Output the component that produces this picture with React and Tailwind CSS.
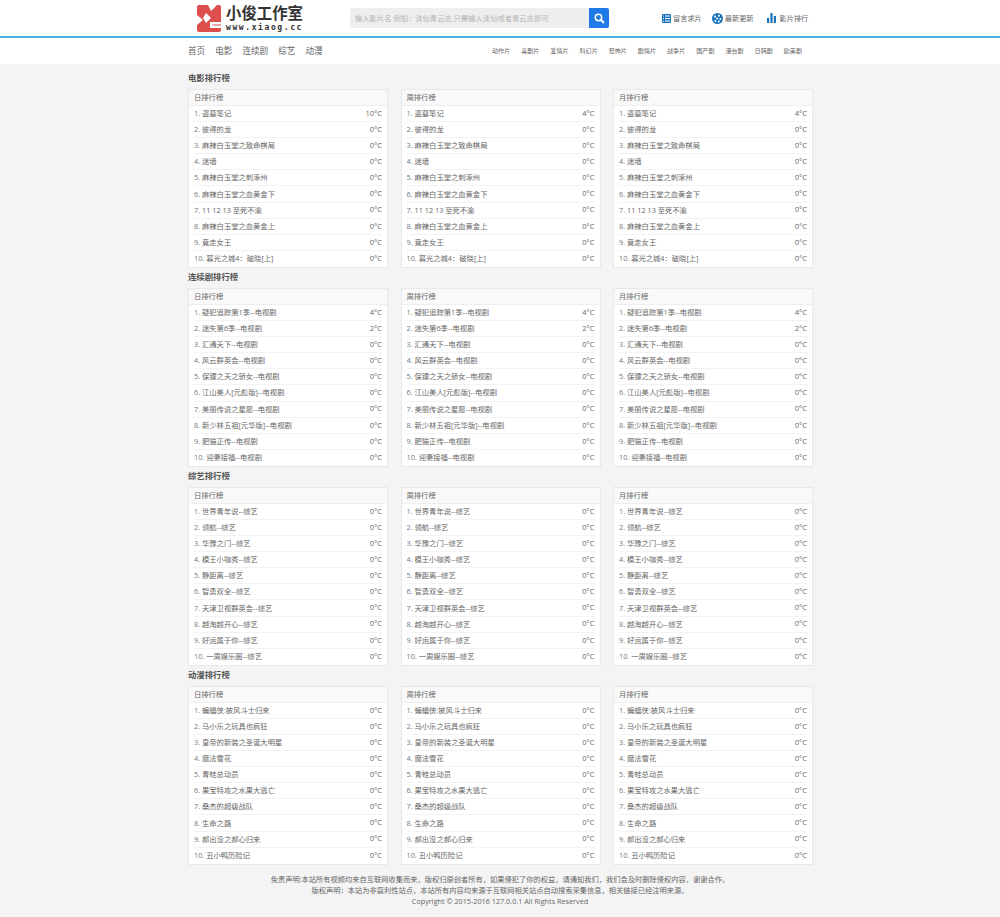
import React from "react";

const movies = [["盗墓笔记","10°C","4°C","4°C"],["彼得的龙"],["麻辣白玉堂之致命棋局"],["迷墙"],["麻辣白玉堂之刺涿州"],["麻辣白玉堂之血黄金下"],["11 12 13 至死不渝"],["麻辣白玉堂之血黄金上"],["竟走女王"],["暮光之城4：破晓[上]"]];
const tv = [["疑犯追踪第1季--电视剧","4°C","4°C","4°C"],["迷失第6季--电视剧","2°C","2°C","2°C"],["汇通天下--电视剧"],["风云群英会--电视剧"],["保镖之天之骄女--电视剧"],["江山美人[元彪版]--电视剧"],["美丽传说之星愿--电视剧"],["新少林五祖[元华版]--电视剧"],["肥猫正传--电视剧"],["迎妻接福--电视剧"]];
const variety = [["世界青年说--综艺"],["领航--综艺"],["华豫之门--综艺"],["模王小咖秀--综艺"],["静距离--综艺"],["智勇双全--综艺"],["天津卫视群英会--综艺"],["越淘越开心--综艺"],["好运属于你--综艺"],["一周娱乐圈--综艺"]];
const anime = [["蝙蝠侠:披风斗士归来"],["马小乐之玩具也疯狂"],["皇帝的新装之圣诞大明星"],["魔法雪花"],["青蛙总动员"],["果宝特攻之水果大逃亡"],["桑杰的超级战队"],["生命之路"],["郝出没之郝心归来"],["丑小鸭历险记"]];

const sections = [
  ["电影排行榜", movies],
  ["连续剧排行榜", tv],
  ["综艺排行榜", variety],
  ["动漫排行榜", anime],
];
const periods = ["日排行榜", "周排行榜", "月排行榜"];
const categories = ["动作片","喜剧片","爱情片","科幻片","恐怖片","剧情片","战争片","国产剧","港台剧","日韩剧","欧美剧"];

function Card({ title, rows, col }) {
  return (
    <div className="w-[200px] border border-[#e8e8e8] bg-white">
      <div className="flex h-[16px] items-center border-b border-[#eeeeee] bg-[#f9f9f9] px-[5px] text-[7.3px] text-[#666]">{title}</div>
      <ul className="px-[5px]">
        {rows.map((r, i) => (
          <li key={i} className="flex h-[16.1px] items-center justify-between border-b border-[#f3f3f3] text-[7.3px] text-[#666] last:border-b-0">
            <span><span className="text-[7.3px] text-[#777]">{i + 1}. </span>{r[0]}</span>
            <span className="text-[7.5px] text-[#666]">{r[col + 1] || "0°C"}</span>
          </li>
        ))}
      </ul>
    </div>
  );
}

function Logo() {
  return (
    <div className="flex items-center">
      <svg width="24" height="27" viewBox="0 0 24 27">
        <rect width="24" height="27" rx="2" fill="#dc4f4c"/>
        <path d="M8 0H11L14 6L20 0H13Z" fill="#fff"/>
        <path d="M0 10L6 15L0 20Z" fill="#fff"/>
        <path d="M9 8L14 13L9 18L6 13Z" fill="#fff"/>
        <path d="M13 17H24V19.5H15.5V20.5H24V23H13Z" fill="#fff"/>
      </svg>
      <div className="ml-[5px] flex flex-col">
        <span className="text-[15.4px] leading-[18px] font-bold text-[#333]">小俊工作室</span>
        <span className="font-['DejaVu_Sans_Mono',monospace] text-[8px] leading-[9px] font-bold tracking-[1.6px] whitespace-nowrap text-[#333]">www.xiaog.cc</span>
      </div>
    </div>
  );
}

export default function App() {
  return (
    <div className="min-h-[917px] bg-[#f4f4f4] font-['Open_Sans','Noto_Sans_CJK_SC',sans-serif]">
      <div className="h-[38px] border-b-2 border-[#45b0dc] bg-white">
        <div className="mx-auto flex h-[36px] w-[626px] items-center">
          <div className="ml-[10px] w-[153px]"><Logo /></div>
          <div className="flex h-[20px] w-[259px]">
            <div className="flex w-[239px] items-center rounded-l-[2px] bg-[#eeeeee] px-[5px] text-[7.3px] whitespace-nowrap text-[#b5b5b5]">输入影片名 例如：诛仙青云志 只需输入诛仙或者青云志即可</div>
            <div className="flex w-[20px] items-center justify-center rounded-r-[2px] bg-[#1f7ae8]">
              <svg width="11" height="11" viewBox="0 0 11 11" fill="none" stroke="#fff" strokeWidth="1.5"><circle cx="4.5" cy="4.5" r="3.2"/><path d="M7 7L10 10" strokeWidth="2"/></svg>
            </div>
          </div>
          <div className="ml-[53px] flex items-center text-[7.2px] text-[#666]">
            <svg width="9" height="9" viewBox="0 0 9 9"><rect width="9" height="9" rx="1" fill="#1a75bc"/><path d="M1 2H2M3 2H8M1 4.5H2M3 4.5H8M1 7H2M3 7H8" stroke="#fff" strokeWidth="1"/></svg>
            <span className="ml-[2px]">留言求片</span>
            <svg width="11" height="11" viewBox="0 0 11 11" className="ml-[10px]"><circle cx="5.5" cy="5.5" r="5.5" fill="#1a75bc"/><circle cx="3" cy="3.6" r="1" fill="#fff"/><circle cx="7" cy="2.8" r="1" fill="#fff"/><circle cx="5" cy="5.6" r="1" fill="#fff"/><circle cx="8.4" cy="6" r="1" fill="#fff"/><circle cx="3.4" cy="8" r="1" fill="#fff"/><circle cx="6.8" cy="8.4" r="1" fill="#fff"/></svg>
            <span className="ml-[2px]">最新更新</span>
            <svg width="9" height="10" viewBox="0 0 9 10" className="ml-[13px]" fill="#1a75bc"><rect x="0" y="5" width="2.2" height="5"/><rect x="3.4" y="0" width="2.2" height="10"/><rect x="6.8" y="3" width="2.2" height="7"/></svg>
            <span className="ml-[4px]">影片排行</span>
          </div>
        </div>
      </div>
      <div className="h-[26px] bg-white">
        <div className="mx-auto flex h-full w-[626px] items-center justify-between">
          <div className="flex gap-[10px] pl-[1px] text-[8.6px] text-[#666]">
            {["首页","电影","连续剧","综艺","动漫"].map((t) => <span key={t}>{t}</span>)}
          </div>
          <div className="mr-[11px] flex gap-[10.9px] text-[6.1px] text-[#666]">
            {categories.map((t) => <span key={t}>{t}</span>)}
          </div>
        </div>
      </div>
      <div className="mx-auto w-[626px] pt-[6px]">
        {sections.map(([name, rows]) => (
          <section key={name} className="mb-[1px]">
            <h2 className="flex h-[16px] items-center pl-[1px] text-[8.4px] font-bold text-[#555]">{name}</h2>
            <div className="mt-[3px] flex justify-between pl-[1px]">
              {periods.map((p, c) => <Card key={p} title={p} rows={rows} col={c} />)}
            </div>
          </section>
        ))}
      </div>
      <div className="pt-[8px] text-center text-[7.25px] leading-[11px] text-[#666]">
        <p>免责声明:本站所有视频均来自互联网收集而来，版权归原创者所有，如果侵犯了你的权益，请通知我们，我们会及时删除侵权内容，谢谢合作。</p>
        <p>版权声明：本站为非赢利性站点，本站所有内容均来源于互联网相关站点自动搜索采集信息，相关链接已经注明来源。</p>
        <p>Copyright © 2015-2016 127.0.0.1 All Rights Reserved</p>
      </div>
    </div>
  );
}
